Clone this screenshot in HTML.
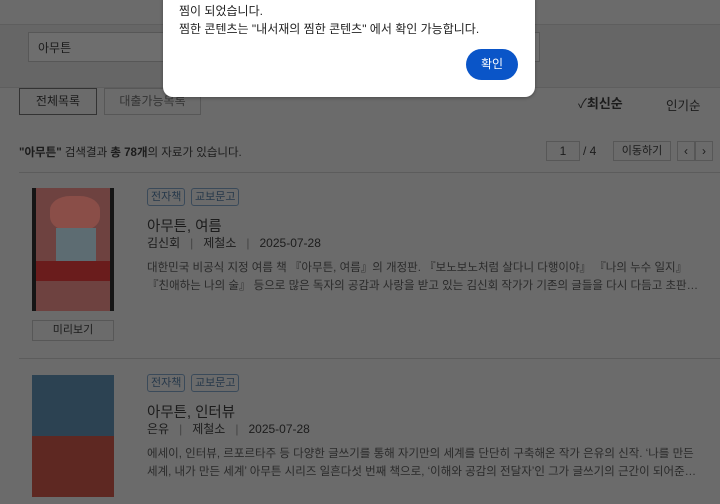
<!DOCTYPE html>
<html><head><meta charset="utf-8"><style>
*{margin:0;padding:0;box-sizing:border-box}
body{width:720px;height:504px;overflow:hidden;background:#6b6b6b;font-family:"Liberation Sans","Noto Sans CJK KR",sans-serif;color:#1c1c1c;position:relative;font-size:12px}
.a{position:absolute}
.box{border:1px solid #575757}
.tag{position:absolute;height:18px;border:1px solid #3a4a5a;border-radius:3px;font-size:11px;line-height:16px;padding:0 3px;color:#26384a}
.desc{font-size:11.5px;color:#2a2a2a;line-height:18px;white-space:nowrap}
.meta{font-size:12px}
.meta span{color:#444;margin:0 10px}
</style></head><body>
<div class="a" style="left:0;top:24px;width:720px;height:64px;border-top:1px solid #5e5e5e;border-bottom:1px solid #5e5e5e;background:#666"></div>
<div class="a box" style="left:28px;top:32px;width:512px;height:30px;background:#6e6e6e;padding:6px 9px;font-size:12px">아무튼</div>
<div class="a box" style="left:19px;top:88px;width:78px;height:27px;border-color:#333;text-align:center;line-height:25px">전체목록</div>
<div class="a box" style="left:104px;top:88px;width:97px;height:27px;text-align:center;line-height:25px;color:#333">대출가능목록</div>
<div class="a" style="left:578px;top:93px;font-size:13px">✓<b style="font-weight:600">최신순</b></div>
<div class="a" style="left:666px;top:95px;font-size:12.5px">인기순</div>
<div class="a" style="left:19px;top:144px;font-size:11.5px"><b>"아무튼"</b> 검색결과 <b>총 78개</b>의 자료가 있습니다.</div>
<div class="a box" style="left:546px;top:141px;width:34px;height:20px;text-align:center;line-height:18px">1</div>
<div class="a" style="left:583px;top:144px">/ 4</div>
<div class="a box" style="left:613px;top:141px;width:58px;height:20px;text-align:center;line-height:18px;font-size:11px">이동하기</div>
<div class="a box" style="left:677px;top:141px;width:18px;height:20px;text-align:center;line-height:18px">‹</div>
<div class="a box" style="left:695px;top:141px;width:18px;height:20px;text-align:center;line-height:18px">›</div>
<div class="a" style="left:19px;top:172px;width:701px;height:1px;background:#5c5c5c"></div>
<div class="a" style="left:32px;top:188px;width:82px;height:123px;background:#6e4240;border-left:4px solid #151515;border-right:4px solid #151515">
 <div class="a" style="left:14px;top:8px;width:50px;height:35px;background:#8a4e48;border-radius:40%"></div>
 <div class="a" style="left:20px;top:40px;width:40px;height:35px;background:#5d6c72"></div>
 <div class="a" style="left:0;top:73px;width:74px;height:20px;background:#6a1c1c"></div>
</div>
<div class="a box" style="left:32px;top:320px;width:82px;height:21px;text-align:center;line-height:19px;font-size:11px">미리보기</div>
<div class="tag" style="left:147px;top:188px">전자책</div>
<div class="tag" style="left:191px;top:188px">교보문고</div>
<div class="a" style="left:147px;top:215px;font-size:14.5px">아무튼, 여름</div>
<div class="a meta" style="left:147px;top:234px">김신회<span>|</span>제철소<span>|</span>2025-07-28</div>
<div class="a desc" style="left:147px;top:259px">대한민국 비공식 지정 여름 책 『아무튼, 여름』의 개정판. 『보노보노처럼 살다니 다행이야』 『나의 누수 일지』<br>『친애하는 나의 술』 등으로 많은 독자의 공감과 사랑을 받고 있는 김신회 작가가 기존의 글들을 다시 다듬고 초판…</div>
<div class="a" style="left:19px;top:358px;width:701px;height:1px;background:#5c5c5c"></div>
<div class="a" style="left:32px;top:375px;width:82px;height:122px;background:#2c4252">
 <div class="a" style="left:0;top:61px;width:82px;height:61px;background:#5e2822"></div>
</div>
<div class="tag" style="left:147px;top:374px">전자책</div>
<div class="tag" style="left:191px;top:374px">교보문고</div>
<div class="a" style="left:147px;top:401px;font-size:14.5px">아무튼, 인터뷰</div>
<div class="a meta" style="left:147px;top:420px">은유<span>|</span>제철소<span>|</span>2025-07-28</div>
<div class="a desc" style="left:147px;top:445px">에세이, 인터뷰, 르포르타주 등 다양한 글쓰기를 통해 자기만의 세계를 단단히 구축해온 작가 은유의 신작. ‘나를 만든<br>세계, 내가 만든 세계’ 아무튼 시리즈 일흔다섯 번째 책으로, ‘이해와 공감의 전달자’인 그가 글쓰기의 근간이 되어준…</div>
<div class="a" style="left:163px;top:-10px;width:372px;height:107px;background:#fff;border-radius:10px;box-shadow:0 1px 3px rgba(0,0,0,.3)">
 <div class="a" style="left:16px;top:12px;font-size:12px;color:#222;line-height:18px">찜이 되었습니다.<br>찜한 콘텐츠는 "내서재의 찜한 콘텐츠" 에서 확인 가능합니다.</div>
 <div class="a" style="left:303px;top:59px;width:52px;height:31px;background:#0a55c8;border-radius:16px;color:#fff;text-align:center;line-height:31px;font-size:12px">확인</div>
</div>
</body></html>
